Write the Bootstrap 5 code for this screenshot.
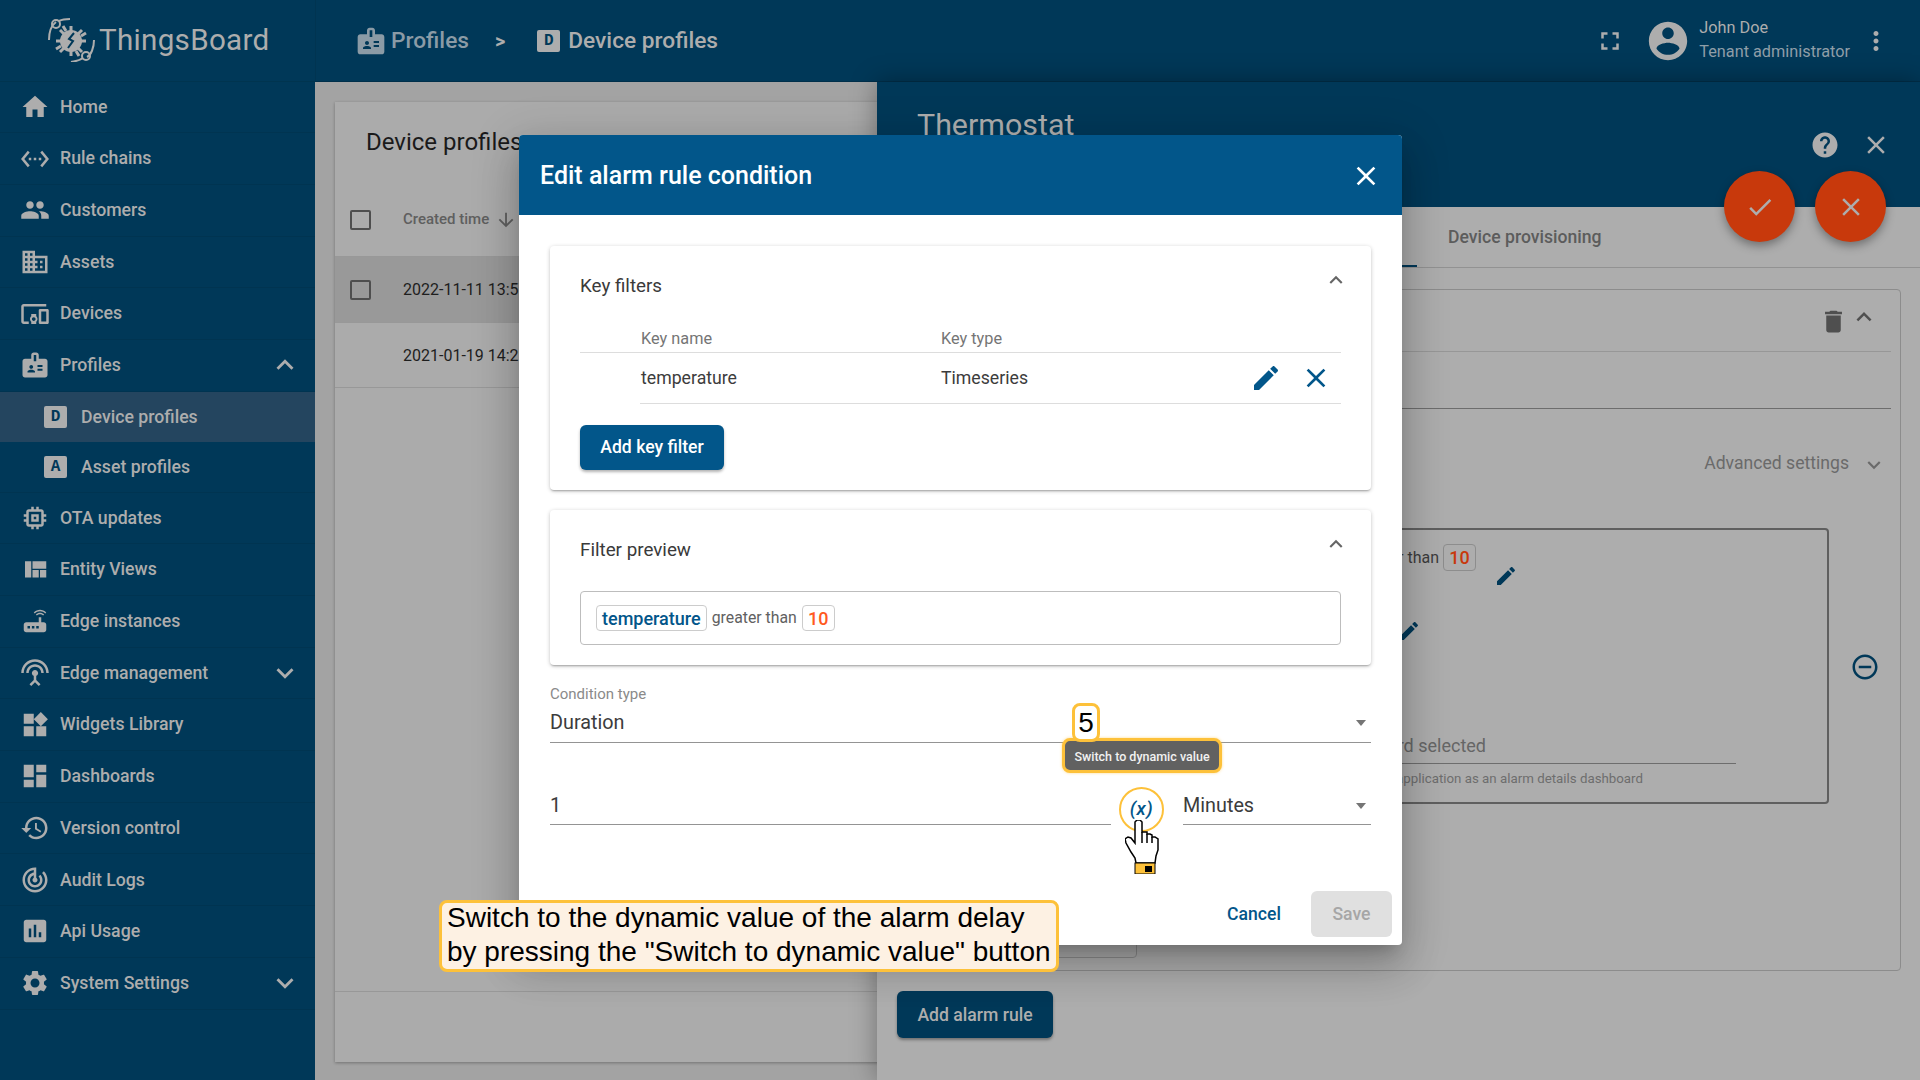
<!DOCTYPE html>
<html lang="en">
<head>
  <meta charset="UTF-8">
  <title>Device profiles</title>
  <link href="https://cdn.jsdelivr.net/npm/bootstrap@5.3.2/dist/css/bootstrap.min.css" rel="stylesheet">
  <style>
    body { font-family: Roboto, "Liberation Sans", sans-serif; background: #a3a3a3; overflow: hidden; }
    svg.ic { fill: currentColor; flex: none; }
    .app { height: 1080px; width: 1920px; position: relative; overflow: hidden; }

    /* sidebar */
    .sidebar { width: 315px; background: #003858; color: #adadad; flex: none; }
    .logo-row { height: 81.5px; padding-left: 48px; gap: 4px; border-bottom: 1px solid #00344f; }
    .logo-text { font-size: 29.6px; letter-spacing: .3px; }
    .side-link { height: 51.7px; padding: 0 13px 0 20px; gap: 10px; color: #adadad; font-size: 17.7px; font-weight: 500; border-bottom: 1px solid #003451; }
    .side-link:hover { color: #adadad; }
    .side-sub { height: 50.5px; padding-left: 44px; gap: 14px; }
    .side-sub.active-row { background: #24455f; border-bottom: 0; }
    .letter-box { width: 23px; height: 22px; background: #adadad; color: #003858; border-radius: 2px; font: 700 16px "Liberation Mono", monospace; flex: none; }

    /* top bar */
    .topbar { height: 82px; background: #003858; color: #adadad; border-bottom: 1px solid #002f4a; border-left: 1px solid #003451; flex: none; }
    .crumbs { padding: 2px 0 0 39px; font-size: 22.7px; font-weight: 500; }
    .crumb-dim { color: #8b9ba6; }
    .crumb-sep { font-size: 20px; font-weight: 700; margin: 0 32px 0 26px; color: #adadad; }
    .user-name { font-size: 16.3px; line-height: 24px; }
    .user-role { font-size: 16.3px; line-height: 24px; color: #8f9ea8; }

    /* device profile list */
    .workspace { position: relative; }
    .list-card { margin: 20px 0 18px 20px; background: #ababab; box-shadow: 0 1px 3px rgba(0,0,0,.3); width: 800px; }
    .list-title { height: 80px; padding-left: 31px; font-size: 24px; color: #1a1a1a; }
    .list-row { padding-left: 15px; gap: 32px; border-bottom: 1px solid #989898; font-size: 16px; color: #1e1e1e; }
    .list-head { height: 75px; font-size: 15px; font-weight: 500; color: #5f5f5f; padding-top: 1px; }
    .list-sel { height: 66px; background: #999; }
    .list-plain { height: 65px; padding-left: 68px; padding-top: 2px; }
    .fake-check { width: 21px; height: 20px; border: 2px solid #4e4e4e; border-radius: 2px; }
    .list-foot { height: 71px; border-top: 1px solid #989898; }

    /* drawer */
    .drawer { position: absolute; left: 562px; right: 0; top: 0; bottom: 0; background: #adadad; box-shadow: 0 0 24px rgba(0,0,0,.35); }
    .drawer-head { height: 125px; background: #003858; color: #adadad; padding: 23px 29px 0 40px; }
    .drawer-title { font-size: 30.4px; line-height: 40px; }
    .drawer-tools { gap: 21px; margin-top: 25px; }
    .drawer-tabs { height: 61px; border-bottom: 1px solid #929292; }
    .tab-on { margin-left: 340px; width: 200px; height: 2px; background: #003858; align-self: flex-end; }
    .tab-off { margin-left: 31px; font-size: 17.6px; font-weight: 500; color: #5c5c5c; }
    .alarm-box { margin: 21px 19px 0 20px; height: 682px; border: 1px solid #8c8c8c; border-radius: 4px; padding-left: 19px; }
    .alarm-top { height: 62px; margin-right: 9px; margin-left: -19px; border-bottom: 1px solid #979797; color: #4f4f4f; padding: 1px 12px 0 0; gap: 1px; }
    .alarm-field { height: 57px; margin-right: 9px; border-bottom: 1px solid #6d6d6d; }
    .adv-row { height: 119px; padding: 2px 13px 12px 0; color: #6a6a6a; font-size: 17.6px; gap: 12px; }
    .adv-row svg { margin-top: 3px; }
    .rule-wrap { gap: 21px; }
    .rule-box { width: 912px; height: 276px; border: 2px solid #5f5f5f; border-radius: 4px; }
    .rule-minus { color: #003858; margin-top: 2px; }
    .rule-line { width: 557px; margin-top: 14px; gap: 4px; font-size: 16px; color: #3c3c3c; }
    .chip-dark { border: 1px solid #8d8d8d; border-radius: 4px; height: 27px; width: 33px; color: #c8390c; font-weight: 500; font-size: 18px; }
    .pen-a { margin: -7px 0 0 575px; color: #003858; display: block; }
    .pen-b { margin: 31px 0 0 478px; color: #003858; display: block; }
    .dash-field { width: 799px; margin: 91px 0 0 18px; border-bottom: 1px solid #6d6d6d; padding-bottom: 5px; font-size: 18px; line-height: 24px; color: #666; }
    .dash-value { width: 549px; text-align: right; }
    .dash-help { width: 706px; margin: 6px 0 0 18px; text-align: right; font-size: 13.3px; line-height: 18px; color: #6e6e6e; }
    .sched-box { width: 220px; height: 130px; margin-top: 24px; border: 1px solid #8c8c8c; border-radius: 4px; }
    .add-rule { margin: 20px 0 0 20px; width: 156px; height: 47px; padding: 1px 0 0; background: #003858; color: #adadad; font-size: 17.6px; font-weight: 500; border: 0; box-shadow: 0 2px 3px rgba(0,0,0,.35); }
    .fab-round { position: absolute; top: 89px; width: 71px; height: 71px; border-radius: 50%; background: #c8390c; color: #adadad; box-shadow: 0 4px 10px rgba(0,0,0,.35); }

    /* dialog */
    .edit-dialog { position: absolute; left: 519px; top: 135px; width: 883px; height: 810px; background: #fff; border-radius: 4px; box-shadow: 0 11px 15px -7px rgba(0,0,0,.2), 0 24px 38px 3px rgba(0,0,0,.14), 0 9px 46px 8px rgba(0,0,0,.12); }
    .dialog-head { height: 80px; background: #02568a; color: #fff; padding: 2px 20px 0 21px; font-size: 25px; font-weight: 500; border-radius: 4px 4px 0 0; flex: none; }
    .dialog-body { padding: 31px 31px 0 31px; }
    .panel-card { border: 0; border-radius: 4px; box-shadow: 0 2px 2px -1px rgba(0,0,0,.25), 0 1px 4px rgba(0,0,0,.22); padding: 25px 30px 20px; color: #333; }
    .panel-card + .panel-card { margin-top: 20px; }
    .panel-head { height: 30px; font-size: 18.8px; color: #3a3a3a; }
    .panel-chev { color: #666; margin: -13px -8px 0 0; }
    .key-head { height: 27px; margin-top: 25px; border-bottom: 1px solid #ddd; padding-left: 61px; font-size: 16.3px; color: #757575; line-height: 26px; }
    .key-row { height: 51px; margin-left: 60px; padding-left: 1px; border-bottom: 1px solid #ddd; font-size: 17.7px; color: #3c3c3c; }
    .key-col { width: 300px; }
    .key-acts { margin-left: auto; gap: 18px; color: #02568a; padding-right: 9px; }
    .add-key { margin-top: 21px; width: 144px; height: 45px; padding: 0; background: #02568a; color: #fff; border: 0; font-size: 17.6px; font-weight: 500; box-shadow: 0 2px 3px rgba(0,0,0,.3); }
    .preview-box { margin-top: 26px; height: 54px; border: 1px solid #bdbdbd; border-radius: 4px; padding-left: 15px; gap: 5px; font-size: 15.8px; color: #616161; }
    .chip-blue { height: 26px; padding: 0 5px; border: 1px solid #ccc; border-radius: 4px; color: #02568a; font-weight: 500; font-size: 18px; }
    .chip-red { height: 26px; width: 33px; border: 1px solid #ccc; border-radius: 4px; color: #ff5a1f; font-weight: 500; font-size: 18px; }
    .field-label { margin-top: 20px; font-size: 15px; line-height: 18px; color: #8a8a8a; }
    .field-value { font-size: 19.8px; line-height: 24px; color: #3c3c3c; padding: 1px 0 7px; border-bottom: 1px solid #949494; }
    .first-value { margin-top: 7px; }
    .caret-down { width: 0; height: 0; border: 5.5px solid transparent; border-top: 6px solid #757575; border-bottom: 0; margin-right: 5px; }
    .delay-row { margin-top: 44px; align-items: flex-end; }
    .delay-row .field-value { padding-top: 2px; padding-bottom: 6px; }
    .dyn-btn { width: 45px; height: 45px; margin: 0 19px -7px 8px; border-radius: 50%; border: 2.5px solid #fdc13a; color: #02568a; font: italic 500 19px Roboto, sans-serif; background: #fff; flex: none; padding: 0 0 2px; letter-spacing: .5px; }
    .unit-col { width: 188px; }
    .dialog-foot { margin-top: auto; padding: 0 10px 8px 0; gap: 14px; }
    .btn-cancel { width: 86px; height: 46px; padding: 0; color: #02568a; font-size: 17.6px; font-weight: 500; border: 0; }
    .btn-save { width: 81px; height: 46px; padding: 0; background: #e0e0e0; color: #a6a6a6; font-size: 17.6px; font-weight: 500; border: 0; }
    .btn-save:disabled { background: #e0e0e0; color: #a6a6a6; opacity: 1; }

    /* annotation overlays */
    .callout { position: absolute; left: 439px; top: 900px; width: 620px; height: 72px; background: #fdf1e3; border: 3px solid #fdc13a; border-radius: 8px; padding: 0 0 0 5px; font: 28px/34px "Liberation Sans", Arial, sans-serif; color: #000; white-space: nowrap; }
    .callout-text { margin-top: -2px; }
    .step-badge { position: absolute; left: 1072px; top: 703px; width: 28px; height: 39px; background: #fff; border: 3px solid #fdc13a; border-radius: 8px; font: 28px/33px "Liberation Sans", Arial, sans-serif; color: #000; text-align: center; z-index: 3; }
    .hint-tip { position: absolute; left: 1062px; top: 738px; width: 160px; height: 35px; background: #616161; border: 3px solid #fdc13a; border-radius: 8px; color: #f1f1f1; font-size: 12.5px; font-weight: 500; padding-top: 4px; z-index: 2; box-shadow: 0 0 3px rgba(253,193,58,.6); }
    .hand-cursor { position: absolute; left: 1125px; top: 820px; z-index: 3; }
  </style>
</head>
<body>
<svg class="d-none">
  <symbol id="i-home" viewBox="0 0 24 24"><path d="M10 20v-6h4v6h5v-8h3L12 3 2 12h3v8z"/></symbol>
  <symbol id="i-rule" viewBox="0 0 24 24"><path d="M7.77 6.76L6.23 5.48.82 12l5.41 6.52 1.54-1.28L3.42 12l4.35-5.24zM7 13h2v-2H7v2zm10-2h-2v2h2v-2zm-6 2h2v-2h-2v2zm6.77-7.52l-1.54 1.28L20.58 12l-4.35 5.24 1.54 1.28L23.18 12l-5.41-6.52z"/></symbol>
  <symbol id="i-group" viewBox="0 0 24 24"><path d="M16 11c1.66 0 2.99-1.34 2.99-3S17.66 5 16 5c-1.66 0-3 1.34-3 3s1.34 3 3 3zm-8 0c1.66 0 2.99-1.34 2.99-3S9.66 5 8 5C6.34 5 5 6.34 5 8s1.34 3 3 3zm0 2c-2.33 0-7 1.17-7 3.5V19h14v-2.5c0-2.33-4.67-3.5-7-3.5zm8 0c-.29 0-.62.02-.97.05 1.16.84 1.97 1.97 1.97 3.45V19h6v-2.5c0-2.33-4.67-3.5-7-3.5z"/></symbol>
  <symbol id="i-domain" viewBox="0 0 24 24"><path d="M12 7V3H2v18h20V7H12zM6 19H4v-2h2v2zm0-4H4v-2h2v2zm0-4H4V9h2v2zm0-4H4V5h2v2zm4 12H8v-2h2v2zm0-4H8v-2h2v2zm0-4H8V9h2v2zm0-4H8V5h2v2zm10 12h-8v-2h2v-2h-2v-2h2v-2h-2V9h8v10zm-2-8h-2v2h2v-2zm0 4h-2v2h2v-2z"/></symbol>
  <symbol id="i-devices" viewBox="0 0 24 24"><path d="M3 6h18V4H3c-1.1 0-2 .9-2 2v12c0 1.1.9 2 2 2h4v-2H3V6zm10 6H9v1.78c-.61.55-1 1.33-1 2.22s.39 1.67 1 2.22V20h4v-1.78c.61-.55 1-1.34 1-2.22s-.39-1.67-1-2.22V12zm-2 5.5c-.83 0-1.5-.67-1.5-1.5s.67-1.5 1.5-1.5 1.5.67 1.5 1.5-.67 1.5-1.5 1.5zM22 8h-6c-.5 0-1 .5-1 1v10c0 .5.5 1 1 1h6c.5 0 1-.5 1-1V9c0-.5-.5-1-1-1zm-1 10h-4v-8h4v8z"/></symbol>
  <symbol id="i-badge" viewBox="0 0 24 24"><path d="M20 7h-5V4c0-1.1-.9-2-2-2h-2c-1.1 0-2 .9-2 2v3H4c-1.1 0-2 .9-2 2v11c0 1.1.9 2 2 2h16c1.1 0 2-.9 2-2V9c0-1.1-.9-2-2-2zM9 12c.83 0 1.5.67 1.5 1.5S9.83 15 9 15s-1.5-.67-1.5-1.5S8.17 12 9 12zm3 6H6v-.75c0-1 2-1.5 3-1.5s3 .5 3 1.5V18zm1-9h-2V4h2v5zm5 7.5h-4V15h4v1.5zm0-3h-4V12h4v1.5z"/></symbol>
  <symbol id="i-memory" viewBox="0 0 24 24"><path d="M15 9H9v6h6V9zm-2 4h-2v-2h2v2zm8-2V9h-2V7c0-1.1-.9-2-2-2h-2V3h-2v2h-2V3H9v2H7c-1.1 0-2 .9-2 2v2H3v2h2v2H3v2h2v2c0 1.1.9 2 2 2h2v2h2v-2h2v2h2v-2h2c1.1 0 2-.9 2-2v-2h2v-2h-2v-2h2zm-4 6H7V7h10v10z"/></symbol>
  <symbol id="i-quilt" viewBox="0 0 24 24"><path d="M10 18h5v-6h-5v6zm-6 0h5V5H4v13zm12 0h5v-6h-5v6zM10 5v6h11V5H10z"/></symbol>
  <symbol id="i-router" viewBox="0 0 24 24"><path d="M20.2 5.9l.8-.8C19.6 3.7 17.8 3 16 3s-3.6.7-5 2.1l.8.8C13 4.8 14.5 4.2 16 4.2s3 .6 4.2 1.7zm-.9.8c-.9-.9-2.1-1.4-3.3-1.4s-2.4.5-3.3 1.4l.8.8c.7-.7 1.6-1 2.5-1 .9 0 1.8.3 2.5 1l.8-.8zM19 13h-2V9h-2v4H5c-1.1 0-2 .9-2 2v4c0 1.1.9 2 2 2h14c1.1 0 2-.9 2-2v-4c0-1.1-.9-2-2-2zM8 18H6v-2h2v2zm3.5 0h-2v-2h2v2zm3.5 0h-2v-2h2v2z"/></symbol>
  <symbol id="i-antenna" viewBox="0 0 24 24"><path d="M12 5c-3.87 0-7 3.13-7 7h2c0-2.76 2.24-5 5-5s5 2.24 5 5h2c0-3.87-3.13-7-7-7zm1 9.29c.88-.39 1.5-1.26 1.5-2.29 0-1.38-1.12-2.5-2.5-2.5S9.5 10.62 9.5 12c0 1.02.62 1.9 1.5 2.29v3.3L7.59 21 9 22.41l3-3 3 3L16.41 21 13 17.59v-3.3zM12 1C5.93 1 1 5.93 1 12h2c0-4.97 4.03-9 9-9s9 4.03 9 9h2c0-6.07-4.93-11-11-11z"/></symbol>
  <symbol id="i-widgets" viewBox="0 0 24 24"><path d="M13 13v8h8v-8h-8zM3 21h8v-8H3v8zM3 3v8h8V3H3zm13.66-1.31L11 7.34 16.66 13l5.66-5.66-5.66-5.65z"/></symbol>
  <symbol id="i-dash" viewBox="0 0 24 24"><path d="M3 13h8V3H3v10zm0 8h8v-6H3v6zm10 0h8V11h-8v10zm0-18v6h8V3h-8z"/></symbol>
  <symbol id="i-history" viewBox="0 0 24 24"><path d="M13 3c-4.97 0-9 4.03-9 9H1l3.89 3.89.07.14L9 12H6c0-3.87 3.13-7 7-7s7 3.13 7 7-3.13 7-7 7c-1.93 0-3.68-.79-4.94-2.06l-1.42 1.42C8.27 19.99 10.51 21 13 21c4.97 0 9-4.03 9-9s-4.03-9-9-9zm-1 5v5l4.28 2.54.72-1.21-3.5-2.08V8H12z"/></symbol>
  <symbol id="i-track" viewBox="0 0 24 24"><path d="M19.07 4.93l-1.41 1.41C19.1 7.79 20 9.79 20 12c0 4.42-3.58 8-8 8s-8-3.58-8-8c0-4.08 3.05-7.44 7-7.93v2.02C8.16 6.57 6 9.03 6 12c0 3.31 2.69 6 6 6s6-2.69 6-6c0-1.66-.67-3.16-1.76-4.24l-1.41 1.41C15.55 9.9 16 10.9 16 12c0 2.21-1.79 4-4 4s-4-1.79-4-4c0-1.86 1.28-3.41 3-3.86v2.14c-.6.35-1 .98-1 1.72 0 1.1.9 2 2 2s2-.9 2-2c0-.74-.4-1.38-1-1.72V2h-1C6.48 2 2 6.48 2 12s4.48 10 10 10 10-4.48 10-10c0-2.76-1.12-5.26-2.93-7.07z"/></symbol>
  <symbol id="i-assess" viewBox="0 0 24 24"><path d="M19 3H5c-1.1 0-2 .9-2 2v14c0 1.1.9 2 2 2h14c1.1 0 2-.9 2-2V5c0-1.1-.9-2-2-2zM9 17H7v-7h2v7zm4 0h-2V7h2v10zm4 0h-2v-4h2v4z"/></symbol>
  <symbol id="i-gear" viewBox="0 0 24 24"><path d="M19.14 12.94c.04-.3.06-.61.06-.94 0-.32-.02-.64-.07-.94l2.03-1.58c.18-.14.23-.41.12-.61l-1.92-3.32c-.12-.22-.37-.29-.59-.22l-2.39.96c-.5-.38-1.03-.7-1.62-.94l-.36-2.54c-.04-.24-.24-.41-.48-.41h-3.84c-.24 0-.43.17-.47.41l-.36 2.54c-.59.24-1.13.57-1.62.94l-2.39-.96c-.22-.08-.47 0-.59.22L2.74 8.87c-.12.21-.08.47.12.61l2.03 1.58c-.05.3-.09.63-.09.94s.02.64.07.94l-2.03 1.58c-.18.14-.23.41-.12.61l1.92 3.32c.12.22.37.29.59.22l2.39-.96c.5.38 1.03.7 1.62.94l.36 2.54c.05.24.24.41.48.41h3.84c.24 0 .44-.17.47-.41l.36-2.54c.59-.24 1.13-.56 1.62-.94l2.39.96c.22.08.47 0 .59-.22l1.92-3.32c.12-.22.07-.47-.12-.61l-2.01-1.58zM12 15.6c-1.98 0-3.6-1.62-3.6-3.6s1.62-3.6 3.6-3.6 3.6 1.62 3.6 3.6-1.62 3.6-3.6 3.6z"/></symbol>
  <symbol id="i-less" viewBox="0 0 24 24"><path d="M12 8l-6 6 1.41 1.41L12 10.83l4.59 4.58L18 14z"/></symbol>
  <symbol id="i-more" viewBox="0 0 24 24"><path d="M16.59 8.59L12 13.17 7.41 8.59 6 10l6 6 6-6z"/></symbol>
  <symbol id="i-edit" viewBox="0 0 24 24"><path d="M3 17.25V21h3.75L17.81 9.94l-3.75-3.75L3 17.25zM20.71 7.04c.39-.39.39-1.02 0-1.41l-2.34-2.34c-.39-.39-1.02-.39-1.41 0l-1.83 1.83 3.75 3.75 1.83-1.83z"/></symbol>
  <symbol id="i-close" viewBox="0 0 24 24"><path d="M19 6.41L17.59 5 12 10.59 6.41 5 5 6.41 10.59 12 5 17.59 6.41 19 12 13.41 17.59 19 19 17.59 13.41 12z"/></symbol>
  <symbol id="i-check" viewBox="0 0 24 24"><path d="M9 16.17L4.83 12l-1.42 1.41L9 19 21 7l-1.41-1.41z"/></symbol>
  <symbol id="i-full" viewBox="0 0 24 24"><path d="M7 14H5v5h5v-2H7v-3zm-2-4h2V7h3V5H5v5zm12 7h-3v2h5v-5h-2v3zM14 5v2h3v3h2V5h-5z"/></symbol>
  <symbol id="i-account" viewBox="0 0 24 24"><path d="M12 2C6.48 2 2 6.48 2 12s4.48 10 10 10 10-4.48 10-10S17.52 2 12 2zm0 3c1.66 0 3 1.34 3 3s-1.34 3-3 3-3-1.34-3-3 1.34-3 3-3zm0 14.2c-2.5 0-4.71-1.28-6-3.22.03-1.99 4-3.08 6-3.08 1.99 0 5.97 1.09 6 3.08-1.29 1.94-3.5 3.22-6 3.22z"/></symbol>
  <symbol id="i-vert" viewBox="0 0 24 24"><path d="M12 8c1.1 0 2-.9 2-2s-.9-2-2-2-2 .9-2 2 .9 2 2 2zm0 2c-1.1 0-2 .9-2 2s.9 2 2 2 2-.9 2-2-.9-2-2-2zm0 6c-1.1 0-2 .9-2 2s.9 2 2 2 2-.9 2-2-.9-2-2-2z"/></symbol>
  <symbol id="i-help" viewBox="0 0 24 24"><path d="M12 2C6.48 2 2 6.48 2 12s4.48 10 10 10 10-4.48 10-10S17.52 2 12 2zm1 17h-2v-2h2v2zm2.07-7.75l-.9.92C13.45 12.9 13 13.5 13 15h-2v-.5c0-1.1.45-2.1 1.17-2.83l1.24-1.26c.37-.36.59-.86.59-1.41 0-1.1-.9-2-2-2s-2 .9-2 2H8c0-2.21 1.79-4 4-4s4 1.79 4 4c0 .88-.36 1.68-.93 2.25z"/></symbol>
  <symbol id="i-trash" viewBox="0 0 24 24"><path d="M6 19c0 1.1.9 2 2 2h8c1.1 0 2-.9 2-2V7H6v12zM19 4h-3.5l-1-1h-5l-1 1H5v2h14V4z"/></symbol>
  <symbol id="i-minus" viewBox="0 0 24 24"><path d="M7 11v2h10v-2H7zm5-9C6.48 2 2 6.48 2 12s4.48 10 10 10 10-4.48 10-10S17.52 2 12 2zm0 18c-4.41 0-8-3.59-8-8s3.59-8 8-8 8 3.59 8 8-3.59 8-8 8z"/></symbol>
  <symbol id="i-down" viewBox="0 0 24 24"><path d="M20 12l-1.41-1.41L13 16.17V4h-2v12.17l-5.58-5.59L4 12l8 8 8-8z"/></symbol>
</svg>

<div class="app d-flex">
  <!-- left menu -->
  <aside class="sidebar d-flex flex-column">
    <div class="logo-row d-flex align-items-center">
      <svg width="47" height="44" viewBox="0 0 47 44" fill="none" stroke="currentColor" style="flex:none">
        <path d="M1 22 C1 14 4 7 8 4" stroke-width="2"/><circle cx="8" cy="6" r="4" stroke-width="2"/><path d="M11 3 C15 1 18 1 22 1" stroke-width="2"/>
        <path d="M46 22 C46 30 43 37 39 39" stroke-width="2"/><circle cx="38" cy="38" r="4" stroke-width="2"/><path d="M35 40 C31 43 28 43 23 44" stroke-width="2"/>
        <circle cx="23" cy="23" r="11" fill="currentColor" stroke="none"/>
        <path d="M23 8v30M8 23h30M12 12l22 22M34 12L12 34M15 8l3 5M31 38l-3-5M38 15l-5 3M8 31l5-3" stroke-width="3"/>
        <path d="M26 15l-5 6 4 2-5 7" stroke="#003858" stroke-width="2"/>
      </svg>
      <span class="logo-text">ThingsBoard</span>
    </div>
    <nav class="nav flex-column">
      <a class="nav-link side-link d-flex align-items-center" href="#"><svg class="ic" width="30" height="30"><use href="#i-home"/></svg>Home</a>
      <a class="nav-link side-link d-flex align-items-center" href="#"><svg class="ic" width="30" height="30"><use href="#i-rule"/></svg>Rule chains</a>
      <a class="nav-link side-link d-flex align-items-center" href="#"><svg class="ic" width="30" height="30"><use href="#i-group"/></svg>Customers</a>
      <a class="nav-link side-link d-flex align-items-center" href="#"><svg class="ic" width="30" height="30"><use href="#i-domain"/></svg>Assets</a>
      <a class="nav-link side-link d-flex align-items-center" href="#"><svg class="ic" width="30" height="30"><use href="#i-devices"/></svg>Devices</a>
      <a class="nav-link side-link d-flex align-items-center" href="#"><svg class="ic" width="30" height="30"><use href="#i-badge"/></svg>Profiles<svg class="ic ms-auto" width="34" height="34"><use href="#i-less"/></svg></a>
      <a class="nav-link side-link side-sub active-row d-flex align-items-center" href="#"><span class="letter-box d-flex align-items-center justify-content-center">D</span>Device profiles</a>
      <a class="nav-link side-link side-sub d-flex align-items-center" href="#"><span class="letter-box d-flex align-items-center justify-content-center">A</span>Asset profiles</a>
      <a class="nav-link side-link d-flex align-items-center" href="#"><svg class="ic" width="30" height="30"><use href="#i-memory"/></svg>OTA updates</a>
      <a class="nav-link side-link d-flex align-items-center" href="#"><svg class="ic" width="30" height="30"><use href="#i-quilt"/></svg>Entity Views</a>
      <a class="nav-link side-link d-flex align-items-center" href="#"><svg class="ic" width="30" height="30"><use href="#i-router"/></svg>Edge instances</a>
      <a class="nav-link side-link d-flex align-items-center" href="#"><svg class="ic" width="30" height="30"><use href="#i-antenna"/></svg>Edge management<svg class="ic ms-auto" width="34" height="34"><use href="#i-more"/></svg></a>
      <a class="nav-link side-link d-flex align-items-center" href="#"><svg class="ic" width="30" height="30"><use href="#i-widgets"/></svg>Widgets Library</a>
      <a class="nav-link side-link d-flex align-items-center" href="#"><svg class="ic" width="30" height="30"><use href="#i-dash"/></svg>Dashboards</a>
      <a class="nav-link side-link d-flex align-items-center" href="#"><svg class="ic" width="30" height="30"><use href="#i-history"/></svg>Version control</a>
      <a class="nav-link side-link d-flex align-items-center" href="#"><svg class="ic" width="30" height="30"><use href="#i-track"/></svg>Audit Logs</a>
      <a class="nav-link side-link d-flex align-items-center" href="#"><svg class="ic" width="30" height="30"><use href="#i-assess"/></svg>Api Usage</a>
      <a class="nav-link side-link d-flex align-items-center" href="#"><svg class="ic" width="30" height="30"><use href="#i-gear"/></svg>System Settings<svg class="ic ms-auto" width="34" height="34"><use href="#i-more"/></svg></a>
    </nav>
  </aside>

  <div class="flex-grow-1 d-flex flex-column" style="min-width:0">
    <!-- top bar -->
    <header class="topbar d-flex align-items-center">
      <div class="crumbs d-flex align-items-center">
        <svg class="ic crumb-dim me-1" width="32" height="32"><use href="#i-badge"/></svg>
        <span class="crumb-dim">Profiles</span>
        <span class="crumb-sep">&gt;</span>
        <span class="letter-box d-flex align-items-center justify-content-center me-2">D</span>
        <span>Device profiles</span>
      </div>
      <div class="ms-auto d-flex align-items-center">
        <svg class="ic" width="30" height="30"><use href="#i-full"/></svg>
        <svg class="ic" width="46" height="46" style="margin-left:20px"><use href="#i-account"/></svg>
        <div style="margin:-2px 0 0 8px">
          <div class="user-name">John Doe</div>
          <div class="user-role">Tenant administrator</div>
        </div>
        <svg class="ic" width="30" height="30" style="margin:0 29px 0 11px"><use href="#i-vert"/></svg>
      </div>
    </header>

    <!-- content -->
    <main class="workspace flex-grow-1 d-flex">
      <section class="list-card d-flex flex-column">
        <div class="list-title d-flex align-items-center">Device profiles</div>
        <div class="list-row list-head d-flex align-items-center"><span class="fake-check"></span><span>Created time</span><svg class="ic" width="22" height="22" style="margin-left:-26px"><use href="#i-down"/></svg></div>
        <div class="list-row list-sel d-flex align-items-center"><span class="fake-check"></span><span>2022-11-11 13:57:20</span></div>
        <div class="list-row list-plain d-flex align-items-center"><span>2021-01-19 14:22:10</span></div>
        <div class="flex-grow-1"></div>
        <div class="list-foot"></div>
      </section>

      <section class="drawer d-flex flex-column">
        <div class="drawer-head d-flex justify-content-between">
          <div class="drawer-title">Thermostat</div>
          <div class="drawer-tools d-flex">
            <svg class="ic" width="30" height="30"><use href="#i-help"/></svg>
            <svg class="ic" width="30" height="30"><use href="#i-close"/></svg>
          </div>
        </div>
        <div class="drawer-tabs d-flex align-items-center">
          <span class="tab-on"></span>
          <span class="tab-off">Device provisioning</span>
        </div>
        <div class="alarm-box">
          <div class="alarm-top d-flex align-items-center justify-content-end">
            <svg class="ic" width="29" height="29"><use href="#i-trash"/></svg>
            <svg class="ic" width="30" height="30" style="margin-top:-8px"><use href="#i-less"/></svg>
          </div>
          <div class="alarm-field"></div>
          <div class="adv-row d-flex align-items-center justify-content-end">Advanced settings<svg class="ic" width="26" height="26"><use href="#i-more"/></svg></div>
          <div class="rule-wrap d-flex align-items-center">
            <div class="rule-box">
              <div class="rule-line d-flex align-items-center justify-content-end">greater than<span class="chip-dark d-flex align-items-center justify-content-center">10</span></div>
              <svg class="ic pen-a" width="24" height="24"><use href="#i-edit"/></svg>
              <svg class="ic pen-b" width="24" height="24"><use href="#i-edit"/></svg>
              <div class="dash-field"><div class="dash-value">No dashboard selected</div></div>
              <div class="dash-help">Used by mobile application as an alarm details dashboard</div>
            </div>
            <svg class="ic rule-minus" width="30" height="30"><use href="#i-minus"/></svg>
          </div>
          <div class="sched-box"></div>
        </div>
        <button class="btn add-rule" type="button">Add alarm rule</button>
        <span class="fab-round d-flex align-items-center justify-content-center" style="right:125px"><svg class="ic" width="30" height="30"><use href="#i-check"/></svg></span>
        <span class="fab-round d-flex align-items-center justify-content-center" style="right:34px"><svg class="ic" width="30" height="30"><use href="#i-close"/></svg></span>
      </section>
    </main>
  </div>

  <!-- dialog -->
  <div class="edit-dialog d-flex flex-column">
    <div class="dialog-head d-flex align-items-center justify-content-between">
      <span>Edit alarm rule condition</span>
      <svg class="ic" width="32" height="32"><use href="#i-close"/></svg>
    </div>
    <div class="dialog-body">
      <div class="card panel-card">
        <div class="panel-head d-flex align-items-center justify-content-between">Key filters<svg class="ic panel-chev" width="26" height="26"><use href="#i-less"/></svg></div>
        <div class="key-head d-flex"><span class="key-col">Key name</span><span>Key type</span></div>
        <div class="key-row d-flex align-items-center">
          <span class="key-col">temperature</span><span>Timeseries</span>
          <span class="key-acts d-flex">
            <svg class="ic" width="32" height="32"><use href="#i-edit"/></svg>
            <svg class="ic" width="32" height="32"><use href="#i-close"/></svg>
          </span>
        </div>
        <div><button class="btn add-key" type="button">Add key filter</button></div>
      </div>
      <div class="card panel-card">
        <div class="panel-head d-flex align-items-center justify-content-between">Filter preview<svg class="ic panel-chev" width="26" height="26"><use href="#i-less"/></svg></div>
        <div class="preview-box d-flex align-items-center">
          <span class="chip-blue d-flex align-items-center">temperature</span>
          <span>greater than</span>
          <span class="chip-red d-flex align-items-center justify-content-center">10</span>
        </div>
      </div>
      <div class="field-label">Condition type</div>
      <div class="field-value first-value d-flex align-items-center justify-content-between">Duration<span class="caret-down"></span></div>
      <div class="delay-row d-flex">
        <div class="field-value flex-grow-1">1</div>
        <button class="dyn-btn" type="button">(x)</button>
        <div class="field-value unit-col d-flex align-items-center justify-content-between">Minutes<span class="caret-down"></span></div>
      </div>
    </div>
    <div class="dialog-foot d-flex justify-content-end">
      <button class="btn btn-cancel" type="button">Cancel</button>
      <button class="btn btn-save" type="button" disabled>Save</button>
    </div>
  </div>

  <!-- tutorial annotations -->
  <div class="step-badge">5</div>
  <div class="hint-tip d-flex align-items-center justify-content-center">Switch to dynamic value</div>
  <svg class="hand-cursor" width="34" height="54" viewBox="0 0 34 54">
    <path d="M10 2L12 0H15L17 2V12H20L22 12V14H25L27 15V17H30L33 19V30L31 36L30 43H11L10 38L6 32L1 23L0 19L3 17L6 18L10 23Z" fill="#fff" stroke="#000" stroke-width="1.5"/>
    <path d="M17 12V23M22 14V23M27 17V23" stroke="#000" stroke-width="1.5" fill="none"/>
    <rect x="10" y="43" width="20" height="11" fill="#fdc13a" stroke="#000"/>
    <rect x="20" y="46" width="7" height="6" fill="#000"/>
  </svg>
  <div class="callout"><div class="callout-text">Switch to the dynamic value of the alarm delay<br>by pressing the "Switch to dynamic value" button</div></div>
</div>
<script src="https://cdn.jsdelivr.net/npm/bootstrap@5.3.2/dist/js/bootstrap.bundle.min.js"></script>
</body>
</html>
